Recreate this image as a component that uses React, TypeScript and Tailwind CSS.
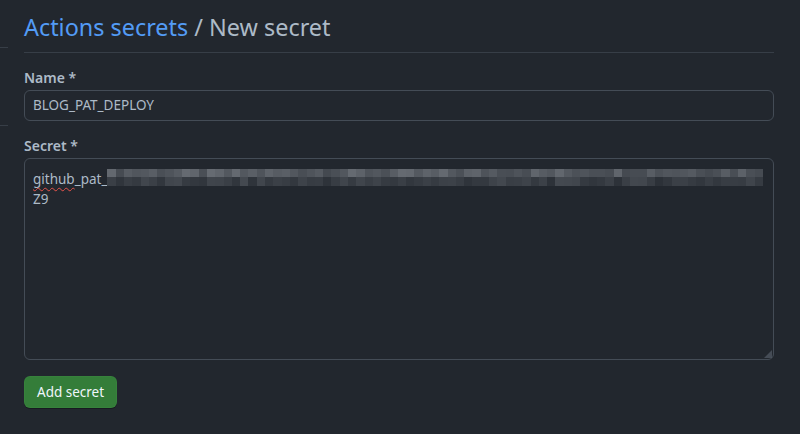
import React from "react";

// pixelated redaction blocks: two rows of grey tiles
const seed = (n: number) => {
  const x = Math.sin(n * 12.9898) * 43758.5453;
  return x - Math.floor(x);
};
const COLS = 79;
const topRow = Array.from({ length: COLS }, (_, i) => {
  const v = Math.round(68 + seed(i + 1) * 34);
  return `rgb(${v},${v + 5},${v + 12})`;
});
const bottomRow = Array.from({ length: COLS }, (_, i) => {
  const v = Math.round(44 + seed(i + 200) * 24);
  return `rgb(${v},${v + 5},${v + 12})`;
});

function Redacted() {
  return (
    <span className="inline-flex flex-col align-top mt-[1px]">
      <span className="flex">
        {topRow.map((c, i) => (
          <span key={i} className="block w-[8.3px] h-[8px]" style={{ background: c }} />
        ))}
      </span>
      <span className="flex">
        {bottomRow.map((c, i) => (
          <span key={i} className="block w-[8.3px] h-[9px]" style={{ background: c }} />
        ))}
      </span>
    </span>
  );
}

export default function App() {
  return (
    <div
      className="w-[800px] h-[434px] bg-[#22272e] text-[#adbac7] overflow-hidden flex"
      style={{ fontFamily: '"Noto Sans", "Open Sans", sans-serif' }}
    >
      {/* sidebar edge */}
      <div className="w-[8px] shrink-0 flex flex-col">
        <div className="h-[47px]" />
        <div className="h-px bg-[#373e47]" />
        <div className="h-[77px]" />
        <div className="h-px bg-[#373e47]" />
      </div>

      <div className="flex-1 pl-[16px] pr-[26px]">
        <div className="pt-[11px] pb-[9px] border-b border-[#373e47]">
          <h1 className="text-[23.4px] leading-[32px] font-normal">
            <span className="text-[#539bf5]">Actions secrets</span>
            <span className="text-[#adbac7]"> / New secret</span>
          </h1>
        </div>

        <div className="pt-[15px]">
          <label className="block text-[14px] leading-[20px] font-semibold text-[#adbac7] mb-[2px]">
            Name *
          </label>
          <div className="h-[31px] rounded-[6px] border border-[#444c56] bg-[#22272e] flex items-center px-[8px] text-[13.5px] text-[#adbac7]">
            BLOG_PAT_DEPLOY
          </div>
        </div>

        <div className="pt-[15px]">
          <label className="block text-[14px] leading-[20px] font-semibold text-[#adbac7] mb-[2px]">
            Secret *
          </label>
          <div className="relative h-[202px] rounded-[6px] border border-[#444c56] bg-[#22272e] px-[8px] pt-[9px] text-[13.5px] leading-[20px] text-[#adbac7]">
            <div className="flex items-start whitespace-nowrap">
              <span className="mt-[1px]">
                <span className="underline decoration-wavy decoration-[#e5534b] decoration-1 underline-offset-[3px]">
                  github
                </span>
                _pat_
              </span>
              <Redacted />
            </div>
            <div>Z9</div>
            <svg
              className="absolute right-[1px] bottom-[1px]"
              width="8"
              height="8"
              viewBox="0 0 8 8"
            >
              <path d="M8 0 L8 8 L0 8 Z" fill="#545d68" opacity="0.7" />
            </svg>
          </div>
        </div>

        <div className="pt-[16px]">
          <button className="h-[32px] px-[12px] rounded-[6px] bg-[#347d39] border border-[#46954a33] text-[13.5px] font-normal text-[#f0f6fc] shadow-[0_1px_0_rgba(0,0,0,0.3)]">
            Add secret
          </button>
        </div>
      </div>
    </div>
  );
}
